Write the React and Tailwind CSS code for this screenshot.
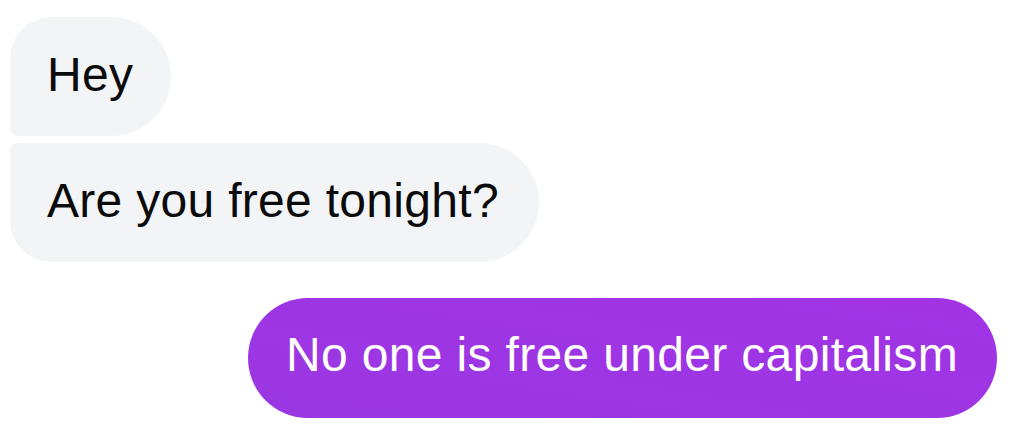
export default function App() {
  const font = { fontFamily: '"Liberation Sans", Arial, sans-serif' };
  return (
    <div className="w-[1012px] h-[445px] bg-white flex flex-col pt-[17px] px-[10px] pr-[15px]" style={font}>
      <div className="self-start h-[119px] flex items-center pb-[4px] pl-[37px] pr-[38px] bg-[#f2f4f6] text-[#0b0b0b] text-[48px] tracking-[0.3px] leading-none rounded-tl-[42px] rounded-bl-[8px] rounded-r-[60px]">
        Hey
      </div>
      <div className="self-start mt-[7px] h-[119px] flex items-center pb-[4px] pl-[37px] pr-[40px] bg-[#f2f4f6] text-[#0b0b0b] text-[48px] tracking-[0.3px] leading-none rounded-tl-[8px] rounded-bl-[42px] rounded-r-[60px]">
        Are you free tonight?
      </div>
      <div className="self-end mt-[36px] h-[120px] flex items-center pb-[7px] pl-[38px] pr-[39px] bg-gradient-to-tr from-[#9a37e2] to-[#a233e6] text-white text-[48px] tracking-[0.33px] leading-none rounded-[60px]">
        No one is free under capitalism
      </div>
    </div>
  );
}
